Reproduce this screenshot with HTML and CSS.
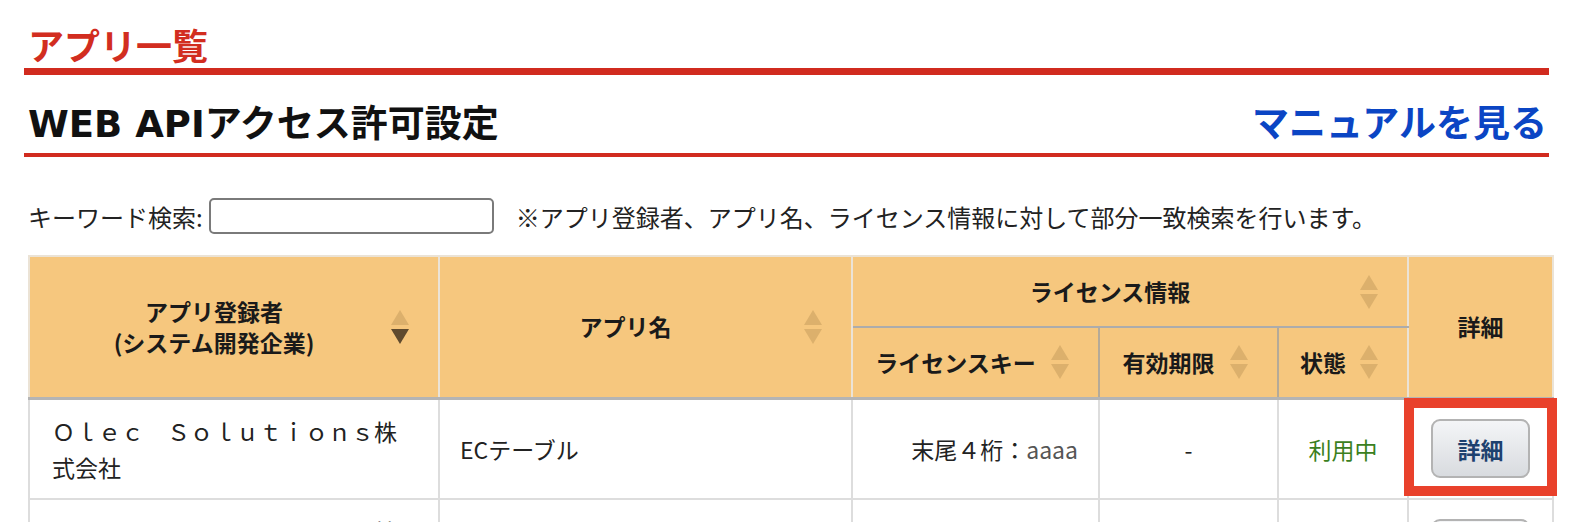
FILE: index.html
```html
<!DOCTYPE html>
<html lang="ja">
<head>
<meta charset="utf-8">
<title>アプリ一覧</title>
<link rel="stylesheet" href="styles.css">
</head>
<body>
<div class="page">
  <h1 class="page-title">アプリ一覧</h1>
  <div class="section-head">
    <h2 class="section-title">WEB APIアクセス許可設定</h2>
    <a class="manual-link" href="#">マニュアルを見る</a>
  </div>
  <div class="search">
    <label class="search-label" for="kw">キーワード検索:</label>
    <input class="search-input" id="kw" type="text">
    <span class="search-note">※アプリ登録者、アプリ名、ライセンス情報に対して部分一致検索を行います。</span>
  </div>
  <table class="apps">
    <colgroup>
      <col class="c-owner">
      <col class="c-name">
      <col class="c-key">
      <col class="c-exp">
      <col class="c-state">
      <col class="c-detail">
    </colgroup>
    <thead>
      <tr class="head-row1">
        <th rowspan="2" class="sortable">アプリ登録者<br>(システム開発企業)<span class="sort desc"></span></th>
        <th rowspan="2" class="sortable">アプリ名<span class="sort"></span></th>
        <th colspan="3" class="sortable group">ライセンス情報<span class="sort"></span></th>
        <th rowspan="2">詳細</th>
      </tr>
      <tr class="head-row2">
        <th class="sortable sub">ライセンスキー<span class="sort"></span></th>
        <th class="sortable sub">有効期限<span class="sort"></span></th>
        <th class="sortable sub">状態<span class="sort"></span></th>
      </tr>
    </thead>
    <tbody>
      <tr>
        <td class="owner">Ｏｌｅｃ　Ｓｏｌｕｔｉｏｎｓ株式会社</td>
        <td class="name">ECテーブル</td>
        <td class="key">末尾４桁：<span class="key-tail">aaaa</span></td>
        <td class="exp">-</td>
        <td class="state">利用中</td>
        <td class="detail"><button class="detail-btn" type="button">詳細</button><span class="highlight"></span></td>
      </tr>
      <tr>
        <td class="owner">Ｏｌｅｃ　Ｓｏｌｕｔｉｏｎｓ株式会社</td>
        <td class="name">ECテーブル</td>
        <td class="key">末尾４桁：<span class="key-tail">bbbb</span></td>
        <td class="exp">-</td>
        <td class="state">利用中</td>
        <td class="detail"><button class="detail-btn" type="button">詳細</button></td>
      </tr>
    </tbody>
  </table>
</div>
</body>
</html>
```

FILE: styles.css
```css
html, body {
  margin: 0;
  padding: 0;
  background: #fff;
  overflow: hidden;
}
body {
  font-family: "Noto Sans CJK JP", "Noto Sans", sans-serif;
  color: #222;
}
.page {
  padding-left: 24px;
  width: 1525px;
}
.page-title {
  margin: 0;
  padding: 20px 0 0 4px;
  font-size: 36px;
  line-height: 48px;
  font-weight: 700;
  color: #d22d20;
  border-bottom: 7px solid #d12b1f;
}
.section-head {
  display: flex;
  justify-content: space-between;
  align-items: baseline;
  margin-top: 22px;
  padding: 0 2px 4px 4px;
  border-bottom: 4px solid #d12b1f;
}
.section-title {
  margin: 0;
  font-family: "DejaVu Sans", "Noto Sans CJK JP", sans-serif;
  font-size: 37px;
  line-height: 48px;
  font-weight: 700;
  color: #111;
}
.manual-link {
  font-size: 37px;
  line-height: 48px;
  font-weight: 700;
  color: #0b45c4;
  text-decoration: none;
}
.search {
  display: flex;
  align-items: center;
  margin-top: 41px;
  padding-left: 4px;
  font-size: 24px;
  color: #222;
}
.search-input {
  width: 285px;
  height: 36px;
  box-sizing: border-box;
  border: 2px solid #7a7a7a;
  border-radius: 5px;
  margin: 0 22px 0 6px;
  padding: 0 6px;
  font-size: 20px;
}
.apps {
  margin: 21px 0 0 4px;
  width: 1524px;
  border-collapse: collapse;
  table-layout: fixed;
  border: 2px solid #dddddd;
}
.c-owner { width: 410px; }
.c-name { width: 413px; }
.c-key { width: 247px; }
.c-exp { width: 179px; }
.c-state { width: 130px; }
.c-detail { width: 145px; }

.apps th {
  position: relative;
  background: #f6c77e;
  border: 2px solid #ebe3d6;
  font-size: 23px;
  line-height: 31px;
  font-weight: 700;
  color: #1a1a1a;
  text-align: center;
  padding: 0 10px;
}
.apps th.sortable {
  padding: 0 50px 0 10px;
}
.head-row1 { height: 71px; }
.head-row2 { height: 71px; }
.apps th.group {
  border-bottom: 2px solid #acacac;
}
.apps th.sub {
  border-left-color: #b5aa98;
  border-right-color: #b5aa98;
}
.apps thead tr:last-child th,
.apps th[rowspan] {
  border-bottom: 3px solid #b4b4b4;
}
.sort {
  position: absolute;
  right: 29px;
  top: 50%;
  width: 18px;
  height: 34px;
  transform: translateY(-50%);
}
.sort::before,
.sort::after {
  content: "";
  position: absolute;
  left: 0;
  border-left: 9px solid transparent;
  border-right: 9px solid transparent;
}
.sort::before {
  top: 0;
  border-bottom: 15px solid #dcb06c;
}
.sort::after {
  top: 19px;
  border-top: 15px solid #dcb06c;
}
.sort.desc::after {
  border-top-color: #5f4a2e;
}

.apps td {
  border: 2px solid #dddddd;
  height: 98px;
  padding: 0 20px;
  font-size: 23px;
  line-height: 36px;
  color: #222;
  vertical-align: middle;
}
.apps td.owner {
  padding: 0 24px 0 22px;
}
.apps td.key {
  text-align: right;
}
.key-tail {
  color: #555;
}
.apps td.exp {
  text-align: center;
}
.apps td.state {
  text-align: center;
  color: #3b7f21;
}
.apps td.detail {
  position: relative;
  text-align: center;
  padding: 0;
}
.detail-btn {
  width: 99px;
  height: 59px;
  border: 2px solid #b3b3b3;
  border-radius: 9px;
  background: linear-gradient(#f4f5f7, #d8dbdf);
  font-family: inherit;
  font-size: 23px;
  font-weight: 700;
  color: #1e416f;
  padding: 0;
  vertical-align: middle;
}
.highlight {
  position: absolute;
  top: -2px;
  left: -5px;
  right: -5px;
  bottom: 2px;
  border: 10px solid #e9412b;
  pointer-events: none;
}
```
